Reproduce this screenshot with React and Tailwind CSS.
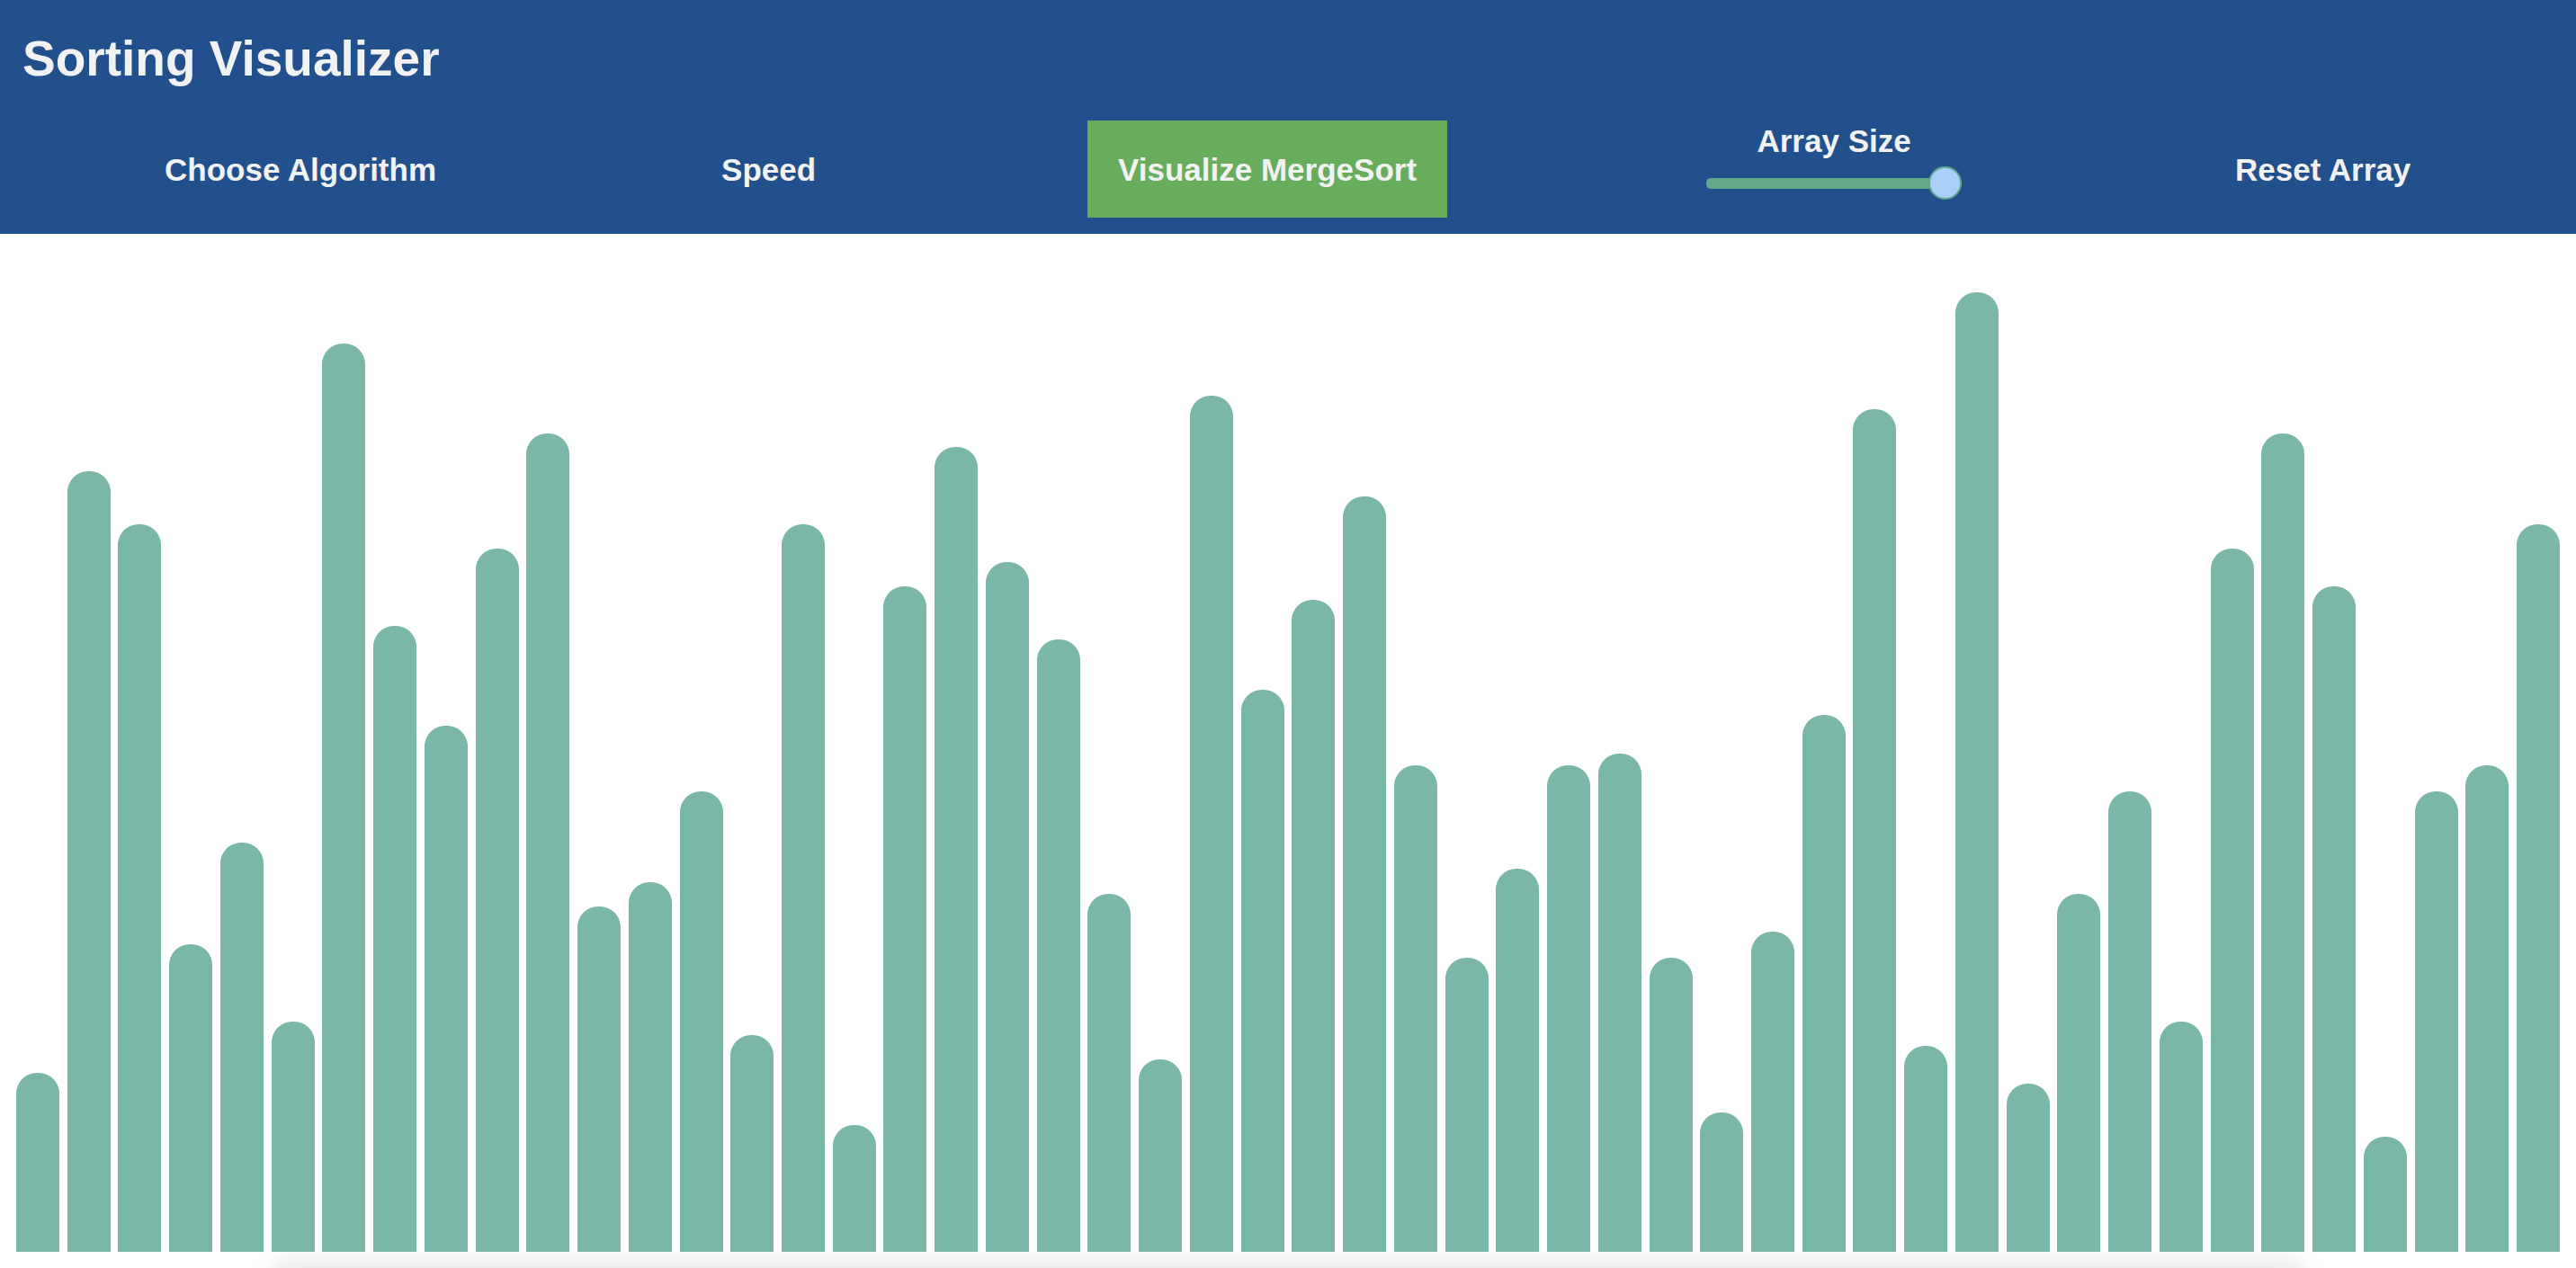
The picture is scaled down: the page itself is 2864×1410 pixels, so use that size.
import React from "react";

const TOPS = [653,287,319,575,513,622,209,381,442,334,264,552,537,482,630,319,685,357,272,342,389,544,645,241,420,365,302,466,583,529,466,459,583,677,567,435,249,637,178,660,544,482,622,334,264,357,692,482,466,319];

export default function App() {
  const bars = TOPS.map((t) => 1392 - Math.round(t * 1.8265));
  return (
    <div className="w-full min-h-[1410px] bg-white font-['Liberation_Sans',Arial,sans-serif] text-[#f2f2f2]">
      <header className="h-[260px] bg-[#22508c] flex flex-col">
        <h1 className="pt-[38px] pl-[25px] text-[55px] leading-[55px] font-bold">Sorting Visualizer</h1>
        <nav className="mt-[41px] h-[108px] flex items-center text-[35px] leading-[35px] font-bold">
          <button className="ml-[183px] font-bold">Choose Algorithm</button>
          <button className="ml-[317px] font-bold">Speed</button>
          <button className="ml-[302px] w-[400px] h-[108px] bg-[#68ad5c] font-bold">Visualize MergeSort</button>
          <div className="ml-[288px] w-[284px] flex flex-col items-center mb-[15px]">
            <span>Array Size</span>
            <div className="relative mt-[11px] w-full h-[37px]">
              <div className="mt-[13px] h-[12px] w-full rounded-[5px] bg-[#62aa8a]"></div>
              <div className="absolute right-0 top-0 w-[37px] h-[37px] rounded-full bg-[#aacff8] border-2 border-[#62aa8a]"></div>
            </div>
          </div>
          <button className="ml-[304px] font-bold">Reset Array</button>
        </nav>
      </header>
      <main className="h-[1150px] flex flex-col">
        <div className="flex-1 flex items-end justify-between px-[18px]">
          {bars.map((h, i) => (
            <div key={i} className="w-[48px] rounded-t-[23px] bg-[#7bb7a8]" style={{ height: h + "px" }}></div>
          ))}
        </div>
        <div className="h-[18px] overflow-hidden">
          <div className="mx-[300px] mt-[6px] h-[40px] rounded-full bg-[#ececec] blur-[10px]"></div>
        </div>
      </main>
    </div>
  );
}
